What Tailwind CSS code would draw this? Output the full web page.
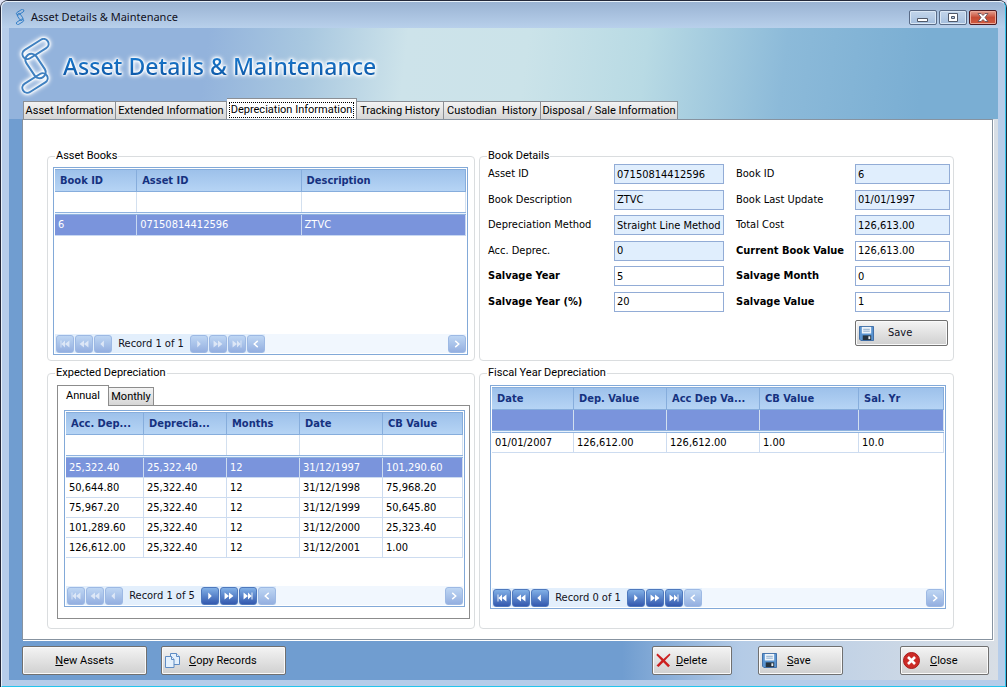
<!DOCTYPE html>
<html lang="en">
<head>
<meta charset="utf-8">
<title>Asset Details &amp; Maintenance</title>
<script src="https://cdn.jsdelivr.net/npm/@tailwindcss/browser@4"></script>
</head>
<body class="bg-[#dfe3f4] font-['DejaVu_Sans_Condensed','Noto_Sans',sans-serif] text-[11px] leading-[14px] text-[#111122]">
<svg class="hidden">
  <symbol id="chain" viewBox="0 0 32 56">
    <g fill="none">
      <rect x="2" y="6" width="29" height="10" rx="5" transform="rotate(-32 16.500 11)"/>
      <rect x="2" y="40" width="28" height="10" rx="5" transform="rotate(-32 16 45)"/>
      <rect x="3" y="22" width="27" height="12" rx="6" transform="rotate(56 16.500 28)"/>
    </g>
  </symbol>
  <symbol id="first" viewBox="0 0 18 18"><path fill="#fff" d="M4 5h1v8H4zM5 9l4-4v8zM9 9l5-4v8z"/></symbol>
  <symbol id="rew" viewBox="0 0 18 18"><path fill="#fff" d="M4 9l5-4v8zM9 9l5-4v8z"/></symbol>
  <symbol id="prev" viewBox="0 0 18 18"><path fill="#fff" d="M6 9l4-4v8z"/></symbol>
  <symbol id="next" viewBox="0 0 18 18"><path fill="#fff" d="M11 9L7 5v8z"/></symbol>
  <symbol id="fwd" viewBox="0 0 18 18"><path fill="#fff" d="M14 9L9 5v8zM9 9L4 5v8z"/></symbol>
  <symbol id="last" viewBox="0 0 18 18"><path fill="#fff" d="M13 5h1v8h-1zM13 9L9 5v8zM9 9L4 5v8z"/></symbol>
  <symbol id="left" viewBox="0 0 18 18"><path fill="none" stroke="#fff" stroke-width="1.600" d="M11 5.500L7 9l4 3.500"/></symbol>
  <symbol id="right" viewBox="0 0 18 18"><path fill="none" stroke="#fff" stroke-width="1.600" d="M7 5.500L11 9l-4 3.500"/></symbol>
  <symbol id="disk" viewBox="0 0 16 16">
    <path fill="#5a94d0" stroke="#3a6aa4" d="M.5.500h15v15h-13.500l-1.500-1.500z"/>
    <path fill="#eef4fa" d="M3 1h10v7H3z"/><path stroke="#88a8c8" d="M4.500 3.500h7M4.500 5.500h7"/>
    <path fill="#26333f" d="M4 10h9v5H4z"/><path fill="#e8eef4" d="M10 11h2v3h-2z"/>
  </symbol>
</svg>

<div class="flex min-h-screen flex-col rounded-t-lg border border-b-0 border-[#23283a] bg-[#b6cdea]">
 <div class="flex flex-1 flex-col rounded-t-md border border-[#e8f1fa] border-r-[#35c4ea] border-b-[#25c4ec]">
  <header class="flex h-[26px] items-center rounded-t-md bg-linear-to-b from-[#9ab3d3] to-[#b8d0eb] pt-1 pr-2 pl-[11px]">
    <svg class="mr-1 h-4 w-3.5 stroke-[#2c7ac4] stroke-3"><use href="#chain"/></svg>
    <h1 class="font-['Noto_Sans',sans-serif] text-[11px]">Asset Details &amp; Maintenance</h1>
    <div class="ml-auto flex gap-0.5">
      <button aria-label="Minimize" class="flex h-[15px] w-7 items-center justify-center rounded-xs border border-[#596b87] bg-linear-to-b from-[#c3d5ea] via-[#b5cbe5] via-50% to-[#a3bddd] shadow-[inset_0_0_0_1px_#dae7f5]"><svg width="12" height="11"><path fill="#fff" stroke="#505868" d="M.5 6.500h10v3H.5z"/></svg></button>
      <button aria-label="Maximize" class="flex h-[15px] w-7 items-center justify-center rounded-xs border border-[#596b87] bg-linear-to-b from-[#c3d5ea] via-[#b5cbe5] via-50% to-[#a3bddd] shadow-[inset_0_0_0_1px_#dae7f5]"><svg width="11" height="11"><path fill="#fff" fill-rule="evenodd" stroke="#505868" d="M.5 1.500h9v8h-9zM3.500 4.500h3v2h-3z"/></svg></button>
      <button aria-label="Close window" class="flex h-[15px] w-7 items-center justify-center rounded-xs border border-[#4c1a22] bg-linear-to-b from-[#e3a092] via-[#c64b35] via-50% to-[#cf5a40] shadow-[inset_0_0_0_1px_#eba898]"><svg width="12" height="11"><path fill="#fff" stroke="#5a4650" stroke-width=".8" d="M1 1.500h3L6 3.500l2-2h3L8 5.500l3 4H8l-2-2-2 2H1l3-4z"/></svg></button>
    </div>
  </header>

  <div class="mx-[7px] mb-1.5 flex flex-1 flex-col bg-linear-to-r from-[#709dd0] from-62% via-[#b4cbe6] via-74% to-[#d8dee5]">
   <div class="flex flex-1 flex-col bg-[linear-gradient(#93b3dc,#709dd0)_left/13px_100%_no-repeat,linear-gradient(#7aaed3_25%,#d8dee5)_right/5px_100%_no-repeat]">
    <div class="flex h-[91px] flex-col justify-between bg-[linear-gradient(97deg,#93b3dc_20%,#a9c8e0_30%,#cde3ea_40%,#cbe3e9_52%,#b8dae4_64%,#8cbad9_78%,#7aaed3_92%)]">
      <div class="flex items-center gap-3 pt-2.5 pl-2.5">
        <svg aria-hidden="true" class="h-14 w-8 stroke-[#3f80c0] stroke-2 [filter:drop-shadow(0_0_1px_white)_drop-shadow(0_0_1px_white)_drop-shadow(0_0_2px_white)]"><use href="#chain"/></svg>
        <h2 class="bg-linear-to-b from-[#1f86dc] to-[#0b4f9c] bg-clip-text font-['Noto_Sans',sans-serif] text-[23px] leading-8 font-medium text-transparent [filter:drop-shadow(0_0_1px_white)_drop-shadow(0_0_1px_white)_drop-shadow(0_0_2px_white)]">Asset Details &amp; Maintenance</h2>
      </div>
      <nav role="tablist" class="-mt-2 flex items-end pl-[14px] font-[Roboto,sans-serif] text-[11px] text-black">
        <button role="tab" class="h-[18px] w-[93px] border border-b-0 border-[#8b8f95] bg-linear-to-b from-[#f3f3f3] to-[#d6d6d6] whitespace-nowrap">Asset Information</button>
        <button role="tab" class="h-[18px] w-[111px] border border-b-0 border-l-0 border-[#8b8f95] bg-linear-to-b from-[#f3f3f3] to-[#d6d6d6] whitespace-nowrap">Extended Information</button>
        <button role="tab" aria-selected="true" class="h-[21px] w-[130px] border border-b-0 border-l-0 border-[#8b8f95] bg-white p-0.5 pb-px whitespace-nowrap"><span class="block border border-dotted border-black">Depreciation Information</span></button>
        <button role="tab" class="h-[18px] w-[87px] border border-b-0 border-l-0 border-[#8b8f95] bg-linear-to-b from-[#f3f3f3] to-[#d6d6d6] whitespace-nowrap">Tracking History</button>
        <button role="tab" class="h-[18px] w-[97px] border border-b-0 border-l-0 border-[#8b8f95] bg-linear-to-b from-[#f3f3f3] to-[#d6d6d6] whitespace-pre">Custodian  History</button>
        <button role="tab" class="h-[18px] w-[137px] border border-b-0 border-l-0 border-[#8b8f95] bg-linear-to-b from-[#f3f3f3] to-[#d6d6d6] whitespace-nowrap">Disposal / Sale Information</button>
      </nav>
    </div>

    <main class="mr-[5px] ml-[13px] grid flex-1 grid-cols-[428fr_475fr] grid-rows-[212fr_263fr] gap-x-1 gap-y-[5px] border border-[#8793a0] bg-white pt-[29px] pr-[38px] pb-2.5 pl-6 shadow-[1px_1px_0_white]">

      <fieldset class="flex min-w-0 flex-col rounded-sm border border-[#dadddf] pt-1 pr-1.5 pb-[5px] pl-[5px]">
        <legend class="ml-0.5 px-px font-[Roboto,sans-serif] text-black">Asset Books</legend>
        <div class="flex flex-1 flex-col border border-[#82a9d8] p-px">
          <table class="w-full table-fixed border-separate border-spacing-0 text-left">
            <colgroup><col class="w-[20%]"><col class="w-[40%]"><col class="w-[40%]"></colgroup>
            <thead>
              <tr class="bg-linear-to-b from-[#9cc0ea] to-[#b7d5f5] text-[#15317f] *:h-[23px] *:border *:border-l-0 *:border-[#86addc] *:px-[5px] *:py-0"><th>Book ID</th><th>Asset ID</th><th>Description</th></tr>
              <tr class="*:h-5 *:border-r *:border-[#d3e0ef] *:p-0"><td></td><td></td><td></td></tr>
              <tr><td colspan="3" class="h-[3px] border-y border-[#8fb3df] bg-[#eaf3fd] p-0"></td></tr>
            </thead>
            <tbody><tr class="bg-[#7a94dc] text-white *:h-[21px] *:border-r *:border-b *:border-[#c8d8f2] *:px-[3px] *:py-0"><td>6</td><td>07150814412596</td><td>ZTVC</td></tr></tbody>
          </table>
          <div class="mt-auto flex h-[19px] items-center bg-[#f1f7fe]">
            <div class="flex h-full items-center gap-px bg-[#e3effc] pl-px *:[button]:h-[18px] *:[button]:w-[18px] *:[button]:rounded-[3px] *:[button]:border *:[button]:border-[#9db9e4] *:[button]:bg-linear-to-b *:[button]:from-[#bed6f3] *:[button]:to-[#94afe0]">
              <button disabled aria-label="First"><svg class="size-4 opacity-60"><use href="#first"/></svg></button>
              <button disabled aria-label="Back a page"><svg class="size-4 opacity-60"><use href="#rew"/></svg></button>
              <button disabled aria-label="Previous"><svg class="size-4 opacity-60"><use href="#prev"/></svg></button>
              <span class="w-[76px] text-center whitespace-nowrap">Record 1 of 1</span>
              <button disabled aria-label="Next"><svg class="size-4 opacity-60"><use href="#next"/></svg></button>
              <button disabled aria-label="Forward a page"><svg class="size-4 opacity-60"><use href="#fwd"/></svg></button>
              <button disabled aria-label="Last"><svg class="size-4 opacity-60"><use href="#last"/></svg></button>
              <button aria-label="Scroll left"><svg class="size-4"><use href="#left"/></svg></button>
            </div>
            <button aria-label="Scroll right" class="ml-auto h-[18px] w-[18px] rounded-[3px] border border-[#9db9e4] bg-linear-to-b from-[#bed6f3] to-[#94afe0]"><svg class="size-4"><use href="#right"/></svg></button>
          </div>
        </div>
      </fieldset>

      <fieldset class="min-w-0 rounded-sm border border-[#dadddf] pt-px pr-[3px] pl-2">
        <legend class="-ml-px px-px font-[Roboto,sans-serif] text-black">Book Details</legend>
        <div class="grid h-[148px] grid-cols-[126fr_110fr_12fr_119fr_95fr] content-between items-center whitespace-nowrap text-black *:[input]:h-5 *:[input]:w-full *:[input]:min-w-0 *:[input]:border *:[input]:border-[#92acd6] *:[input]:px-0.5 *:[input]:read-only:bg-[#e0eefd]">
          <label for="f1">Asset ID</label><input id="f1" readonly value="07150814412596"><i></i>
          <label for="f2">Book ID</label><input id="f2" readonly value="6">
          <label for="f3">Book Description</label><input id="f3" readonly value="ZTVC"><i></i>
          <label for="f4">Book Last Update</label><input id="f4" readonly value="01/01/1997">
          <label for="f5">Depreciation Method</label><input id="f5" readonly value="Straight Line Method"><i></i>
          <label for="f6">Total Cost</label><input id="f6" readonly value="126,613.00">
          <label for="f7">Acc. Deprec.</label><input id="f7" readonly value="0"><i></i>
          <label for="f8" class="font-bold">Current Book Value</label><input id="f8" value="126,613.00">
          <label for="f9" class="font-bold">Salvage Year</label><input id="f9" value="5"><i></i>
          <label for="f10" class="font-bold">Salvage Month</label><input id="f10" value="0">
          <label for="f11" class="font-bold">Salvage Year (%)</label><input id="f11" value="20"><i></i>
          <label for="f12" class="font-bold">Salvage Value</label><input id="f12" value="1">
        </div>
        <button class="mt-2 mr-0.5 ml-auto flex h-[26px] w-[93px] items-center rounded-xs border border-[#707070] bg-linear-to-b from-[#f4f4f4] to-[#d0d0d0] pl-[3px] shadow-[inset_0_0_0_1px_#fafafa]"><svg class="mr-3.5 size-[15px]"><use href="#disk"/></svg>Save</button>
      </fieldset>

      <fieldset class="flex min-w-0 flex-col rounded-sm border border-[#dadddf] pt-[5px] pr-1 pb-[9px] pl-[9px]">
        <legend class="-ml-0.5 px-px font-[Roboto,sans-serif] text-black">Expected Depreciation</legend>
        <div role="tablist" class="relative -mb-px flex items-end font-[Roboto,sans-serif] text-black">
          <button role="tab" aria-selected="true" class="h-[21px] w-[52px] border border-b-0 border-[#8c8c8c] bg-white">Annual</button>
          <button role="tab" class="h-[19px] w-[45px] border border-l-0 border-[#8c8c8c] bg-linear-to-b from-[#f3f3f3] to-[#d6d6d6]">Monthly</button>
        </div>
        <div class="flex flex-1 flex-col border border-[#8c8c8c] pt-1 pr-1 pb-[11px] pl-1.5">
        <div class="flex flex-1 flex-col border border-[#82a9d8] p-px">
          <table class="w-full table-fixed border-separate border-spacing-0 text-left">
            <colgroup><col class="w-[78px]"><col class="w-[83px]"><col class="w-[73px]"><col class="w-[83px]"><col></colgroup>
            <thead>
              <tr class="bg-linear-to-b from-[#9cc0ea] to-[#b7d5f5] text-[#15317f] *:h-[23px] *:border *:border-l-0 *:border-[#86addc] *:px-[5px] *:py-0"><th>Acc. Dep...</th><th>Deprecia...</th><th>Months</th><th>Date</th><th>CB Value</th></tr>
              <tr class="*:h-5 *:border-r *:border-[#d3e0ef] *:p-0"><td></td><td></td><td></td><td></td><td></td></tr>
              <tr><td colspan="5" class="h-[3px] border-y border-[#8fb3df] bg-[#eaf3fd] p-0"></td></tr>
            </thead>
            <tbody class="text-black *:*:h-5 *:*:border-r *:*:border-b *:*:border-[#cddcf0] *:*:px-[3px] *:*:py-0">
              <tr class="bg-[#7a94dc] text-white"><td>25,322.40</td><td>25,322.40</td><td>12</td><td>31/12/1997</td><td>101,290.60</td></tr>
              <tr><td>50,644.80</td><td>25,322.40</td><td>12</td><td>31/12/1998</td><td>75,968.20</td></tr>
              <tr><td>75,967.20</td><td>25,322.40</td><td>12</td><td>31/12/1999</td><td>50,645.80</td></tr>
              <tr><td>101,289.60</td><td>25,322.40</td><td>12</td><td>31/12/2000</td><td>25,323.40</td></tr>
              <tr><td>126,612.00</td><td>25,322.40</td><td>12</td><td>31/12/2001</td><td>1.00</td></tr>
            </tbody>
          </table>
          <div class="mt-auto flex h-[19px] items-center bg-[#f1f7fe]">
            <div class="flex h-full items-center gap-px bg-[#e3effc] pl-px *:[button]:h-[18px] *:[button]:w-[18px] *:[button]:rounded-[3px] *:[button]:border *:[button]:border-[#4f79bd] *:[button]:bg-linear-to-b *:[button]:from-[#82b0e6] *:[button]:to-[#3458ae] *:[button]:disabled:border-[#9db9e4] *:[button]:disabled:from-[#bed6f3] *:[button]:disabled:to-[#94afe0]">
              <button disabled aria-label="First"><svg class="size-4 opacity-60"><use href="#first"/></svg></button>
              <button disabled aria-label="Back a page"><svg class="size-4 opacity-60"><use href="#rew"/></svg></button>
              <button disabled aria-label="Previous"><svg class="size-4 opacity-60"><use href="#prev"/></svg></button>
              <span class="w-[76px] text-center whitespace-nowrap">Record 1 of 5</span>
              <button aria-label="Next"><svg class="size-4"><use href="#next"/></svg></button>
              <button aria-label="Forward a page"><svg class="size-4"><use href="#fwd"/></svg></button>
              <button aria-label="Last"><svg class="size-4"><use href="#last"/></svg></button>
              <button disabled aria-label="Scroll left"><svg class="size-4"><use href="#left"/></svg></button>
            </div>
            <button aria-label="Scroll right" class="ml-auto h-[18px] w-[18px] rounded-[3px] border border-[#9db9e4] bg-linear-to-b from-[#bed6f3] to-[#94afe0]"><svg class="size-4"><use href="#right"/></svg></button>
          </div>
        </div>
        </div>
      </fieldset>

      <fieldset class="flex min-w-0 flex-col rounded-sm border border-[#dadddf] pt-[5px] pr-[7px] pb-[19px] pl-2.5">
        <legend class="-ml-[3px] px-px font-[Roboto,sans-serif] text-black">Fiscal Year Depreciation</legend>
        <div class="flex flex-1 flex-col border border-[#82a9d8] p-px">
          <table class="w-full table-fixed border-separate border-spacing-0 text-left">
            <colgroup><col class="w-[82px]"><col class="w-[93px]"><col class="w-[93px]"><col class="w-[99px]"><col></colgroup>
            <thead>
              <tr class="bg-linear-to-b from-[#9cc0ea] to-[#b7d5f5] text-[#15317f] *:h-[23px] *:border *:border-l-0 *:border-[#86addc] *:px-[5px] *:py-0"><th>Date</th><th>Dep. Value</th><th>Acc Dep Va...</th><th>CB Value</th><th>Sal. Yr</th></tr>
              <tr class="bg-[#7a94dc] *:h-5 *:border-r *:border-[#d3e0ef] *:p-0"><td></td><td></td><td></td><td></td><td></td></tr>
              <tr><td colspan="5" class="h-[3px] border-y border-[#8fb3df] bg-[#eaf3fd] p-0"></td></tr>
            </thead>
            <tbody><tr class="text-black *:h-5 *:border-r *:border-b *:border-[#cddcf0] *:px-[3px] *:py-0"><td>01/01/2007</td><td>126,612.00</td><td>126,612.00</td><td>1.00</td><td>10.0</td></tr></tbody>
          </table>
          <div class="mt-auto flex h-[19px] items-center bg-[#f1f7fe]">
            <div class="flex h-full items-center gap-px bg-[#e3effc] pl-px *:[button]:h-[18px] *:[button]:w-[18px] *:[button]:rounded-[3px] *:[button]:border *:[button]:border-[#4f79bd] *:[button]:bg-linear-to-b *:[button]:from-[#82b0e6] *:[button]:to-[#3458ae] *:[button]:disabled:border-[#9db9e4] *:[button]:disabled:from-[#bed6f3] *:[button]:disabled:to-[#94afe0]">
              <button aria-label="First"><svg class="size-4"><use href="#first"/></svg></button>
              <button aria-label="Back a page"><svg class="size-4"><use href="#rew"/></svg></button>
              <button aria-label="Previous"><svg class="size-4"><use href="#prev"/></svg></button>
              <span class="w-[76px] text-center whitespace-nowrap">Record 0 of 1</span>
              <button aria-label="Next"><svg class="size-4"><use href="#next"/></svg></button>
              <button aria-label="Forward a page"><svg class="size-4"><use href="#fwd"/></svg></button>
              <button aria-label="Last"><svg class="size-4"><use href="#last"/></svg></button>
              <button disabled aria-label="Scroll left"><svg class="size-4"><use href="#left"/></svg></button>
            </div>
            <button aria-label="Scroll right" class="ml-auto h-[18px] w-[18px] rounded-[3px] border border-[#9db9e4] bg-linear-to-b from-[#bed6f3] to-[#94afe0]"><svg class="size-4"><use href="#right"/></svg></button>
          </div>
        </div>
      </fieldset>
    </main>

    <footer class="flex pt-1.5 pr-[9px] pb-[5px] pl-[13px] font-[Roboto,sans-serif] text-[11px] text-black *:flex *:h-[29px] *:items-center *:rounded-xs *:border *:border-[#707070] *:bg-linear-to-b *:from-[#f4f4f4] *:to-[#d0d0d0] *:shadow-[inset_0_0_0_1px_#fafafa]">
      <button class="w-[125px] justify-center"><span><u>N</u>ew Assets</span></button>
      <button class="ml-3.5 w-[125px] pl-[3px]"><svg class="mr-2 size-4" viewBox="0 0 16 16" fill="#e4f0fc" stroke="#5f8cc4"><path d="M5.500.5h6l3 3v8h-9z"/><path d="M11.500.5v3h3"/><path d="M.5 3.500h6l2.500 3v8H.5z"/><path d="M6.500 3.500v3H9"/></svg><span><u>C</u>opy Records</span></button>
      <button class="ml-auto w-20 pl-[3px]"><svg class="mr-[5px] size-[15px]" viewBox="0 0 15 15"><path fill="#cc2020" d="M1.500.5L7.500 6l6-5.500 1 1.200L9 7.500l5 5-1.800 1.800L7.300 9.200 2.500 14 .5 12.500l5-5L.3 2z"/></svg><span><u>D</u>elete</span></button>
      <button class="ml-[26px] w-[85px] pl-[3px]"><svg class="mr-2.5 size-[15px]"><use href="#disk"/></svg><span><u>S</u>ave</span></button>
      <button class="ml-[57px] w-[89px] pl-0.5"><svg class="mr-2.5 size-[17px]" viewBox="0 0 17 17"><circle cx="8.500" cy="8.500" r="8" fill="#cc2b26" stroke="#a81c1c"/><path stroke="#fff" stroke-width="2.600" d="M5 5l7 7M12 5l-7 7"/></svg><span><u>C</u>lose</span></button>
    </footer>
   </div>
  </div>
 </div>
</div>
</body>
</html>
